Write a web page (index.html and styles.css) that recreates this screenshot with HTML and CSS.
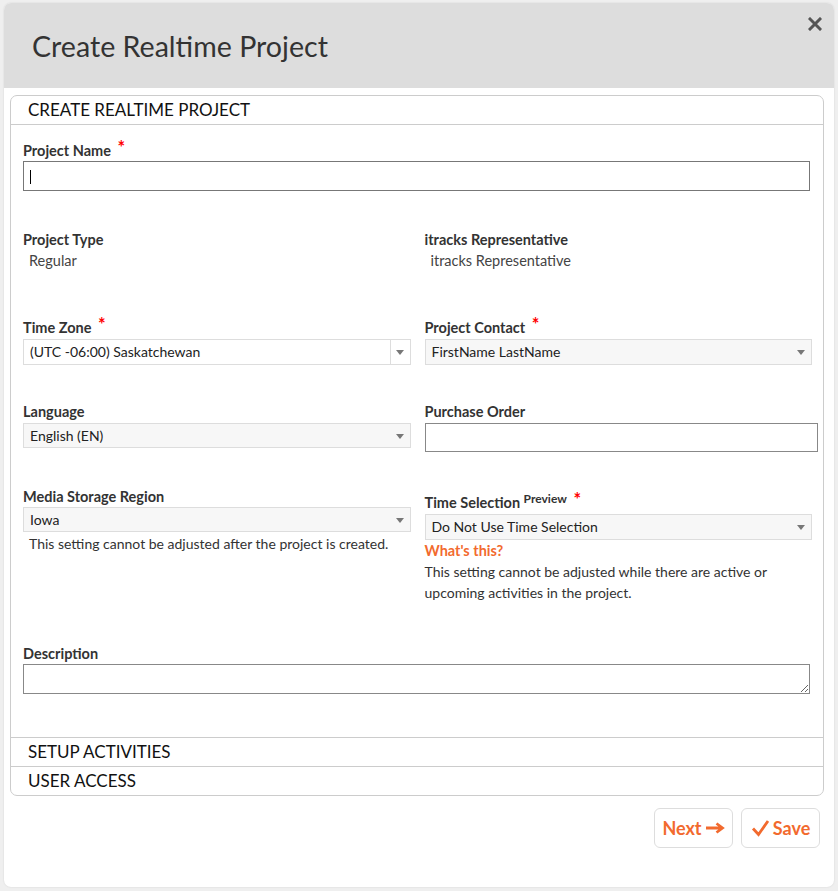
FILE: index.html
```html
<!DOCTYPE html>
<html lang="en">
<head>
  <meta charset="UTF-8">
  <meta name="viewport" content="width=device-width, initial-scale=1.0">
  <title>Create Realtime Project</title>
  <link rel="stylesheet" href="styles.css">
</head>
<body>
  <div class="modal">
    <div class="modal-header">
      <h1>Create Realtime Project</h1>
      <a href="#" class="close" title="Close">
        <svg width="14" height="14" viewBox="0 0 14 14"><path d="M2 2L12 12M12 2L2 12" stroke="#555" stroke-width="3" stroke-linecap="square"/></svg>
      </a>
    </div>

    <div class="modal-body">
      <div class="panel">
        <div class="section-head">CREATE REALTIME PROJECT</div>

        <div class="form">
          <div class="field">
            <label>Project Name <span class="req">*</span></label>
            <div class="text-input wide"><span class="caret"></span></div>
          </div>

          <div class="row row-static">
            <div class="field">
              <label>Project Type</label>
              <div class="value">Regular</div>
            </div>
            <div class="field">
              <label>itracks Representative</label>
              <div class="value">itracks Representative</div>
            </div>
          </div>

          <div class="row">
            <div class="field">
              <label>Time Zone <span class="req">*</span></label>
              <div class="select split">
                <span>(UTC -06:00) Saskatchewan</span>
                <i class="arrow"></i>
              </div>
            </div>
            <div class="field">
              <label>Project Contact <span class="req">*</span></label>
              <div class="select">
                <span>FirstName LastName</span>
                <i class="arrow"></i>
              </div>
            </div>
          </div>

          <div class="row row-tight">
            <div class="field">
              <label>Language</label>
              <div class="select short">
                <span>English (EN)</span>
                <i class="arrow"></i>
              </div>
            </div>
            <div class="field">
              <label>Purchase Order</label>
              <div class="text-input po"></div>
            </div>
          </div>

          <div class="row row-loose">
            <div class="field">
              <label>Media Storage Region</label>
              <div class="select short flush">
                <span>Iowa</span>
                <i class="arrow"></i>
              </div>
              <p class="help indent">This setting cannot be adjusted after the project is created.</p>
            </div>
            <div class="field">
              <label class="with-sup">Time Selection <sup>Preview</sup> <span class="req">*</span></label>
              <div class="select">
                <span>Do Not Use Time Selection</span>
                <i class="arrow"></i>
              </div>
              <a href="#" class="whats-this">What's this?</a>
              <p class="help">This setting cannot be adjusted while there are active or upcoming activities in the project.</p>
            </div>
          </div>

          <div class="field desc">
            <label>Description</label>
            <textarea class="wide"></textarea>
          </div>
        </div>

        <div class="section-head divided">SETUP ACTIVITIES</div>
        <div class="section-head divided">USER ACCESS</div>
      </div>
    </div>

    <div class="modal-footer">
      <button class="btn">Next
        <svg width="20" height="12" viewBox="0 0 20 12"><path d="M1 6H16M11.5 1.5L17.5 6L11.5 10.5" fill="none" stroke="#f26a2e" stroke-width="2.8"/></svg>
      </button>
      <button class="btn">
        <svg width="19" height="18" viewBox="0 0 19 18"><path d="M2 9.5L7.5 15.5L17 2" fill="none" stroke="#f26a2e" stroke-width="2.8"/></svg>
        Save</button>
    </div>
  </div>
</body>
</html>
```

FILE: styles.css
```css
body {
  margin: 0;
  font-family: Lato, "Open Sans", sans-serif;
  background-color: #efefef;
  color: #333;
}
.modal {
  margin: 3px 4px 4px 4px;
  height: 884px;
  background: #fff;
  border-radius: 7px;
  box-shadow: 0 0 2px rgba(0, 0, 0, 0.12);
  overflow: hidden;
}
.modal-header {
  background: #dddddd;
  height: 85px;
  padding: 0 28px;
  position: relative;
  box-sizing: border-box;
}
.modal-header h1 {
  margin: 0;
  padding-top: 26px;
  font-size: 28.6px;
  line-height: 34px;
  font-weight: normal;
  color: #333;
}
.close {
  position: absolute;
  top: 14px;
  right: 12px;
  display: block;
  line-height: 0;
}
.modal-body {
  padding: 7px 10px 0 6px;
}
.panel {
  border: 1px solid #ccc;
  border-radius: 7px;
}
.section-head {
  height: 29px;
  line-height: 27px;
  padding-left: 17px;
  font-size: 17px;
  color: #111;
  border-bottom: 1px solid #ccc;
  box-sizing: border-box;
}
.section-head.divided:last-child {
  border-bottom: none;
  height: 28px;
}
.form {
  padding: 16px 11px 43px 12px;
  border-bottom: 1px solid #ccc;
}
label {
  display: block;
  font-weight: bold;
  font-size: 14.5px;
  line-height: 20px;
  color: #333;
}
label.with-sup {
  padding-top: 6px;
}
.req {
  color: #f00;
  font-size: 18px;
  vertical-align: top;
  line-height: 12px;
  margin-left: 3px;
}
label sup {
  font-size: 12px;
  vertical-align: 5px;
  line-height: 0;
}
.row {
  display: grid;
  grid-template-columns: 1fr 1fr;
  column-gap: 14px;
  margin-top: 38px;
}
.row-static {
  margin-top: 39px;
  padding-bottom: 8px;
}
.row-tight {
  margin-top: 37px;
}
.row-loose {
  margin-top: 39px;
}
.value {
  font-size: 14.5px;
  line-height: 22px;
  padding-left: 6px;
  color: #444;
}
.text-input {
  box-sizing: border-box;
  border: 1px solid #777;
  height: 30px;
  background: #fff;
  padding: 8px 6px;
}
.wide {
  width: calc(100% - 2px);
}
.caret {
  display: block;
  width: 1px;
  height: 14px;
  background: #000;
}
.text-input.po {
  border-color: #888;
  height: 29px;
  width: calc(100% + 6px);
  margin-top: 1px;
  margin-bottom: -4px;
}
.select {
  box-sizing: border-box;
  height: 26px;
  margin-top: 1px;
  border: 1px solid #ddd;
  background: #f7f7f7;
  padding-left: 6px;
  font-size: 14px;
  line-height: 24px;
  color: #222;
  position: relative;
}
.select.short {
  height: 25px;
  line-height: 23px;
}
.select.flush {
  margin-top: 0;
}
.select.split {
  background: #fff;
}
.select.split::after {
  content: "";
  position: absolute;
  top: 0;
  bottom: 0;
  right: 19px;
  border-left: 1px solid #ddd;
}
.arrow {
  position: absolute;
  right: 6px;
  top: 50%;
  margin-top: -2px;
  border-left: 4.5px solid transparent;
  border-right: 4.5px solid transparent;
  border-top: 5px solid #777;
}
.help {
  margin: 0;
  font-size: 14px;
  line-height: 21px;
  color: #333;
}
.help.indent {
  padding-left: 6px;
  margin-top: 1px;
}
.whats-this {
  display: block;
  color: #f26a2e;
  font-weight: bold;
  font-size: 14.5px;
  line-height: 21px;
  text-decoration: none;
}
.desc {
  margin-top: 41px;
}
textarea {
  display: block;
  box-sizing: border-box;
  height: 30px;
  border: 1px solid #888;
  border-radius: 0;
  margin: 0;
  font-family: inherit;
}
.modal-footer {
  display: flex;
  justify-content: flex-end;
  gap: 8px;
  padding: 12px 14px 0 0;
}
.btn {
  height: 40px;
  width: 79px;
  border: 1px solid #ddd;
  border-radius: 6px;
  background: #fff;
  color: #f26a2e;
  font-family: inherit;
  font-weight: bold;
  font-size: 18px;
  display: flex;
  align-items: center;
  justify-content: center;
  gap: 3px;
  padding: 0;
  cursor: pointer;
}
```
